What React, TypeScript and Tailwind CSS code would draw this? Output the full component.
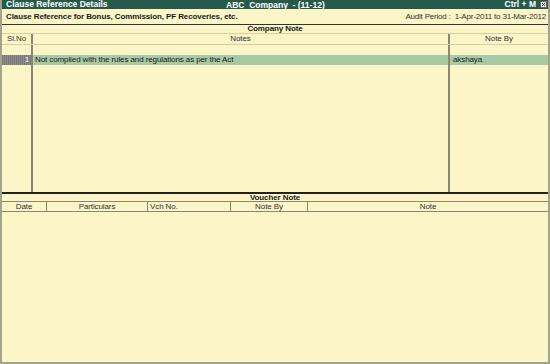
import React from "react";

export default function App() {
  const font = { fontFamily: "'Liberation Sans', Arial, sans-serif" };
  return (
    <div
      className="w-[550px] h-[364px] bg-[#fcf5c7] text-[#1a1a1a] flex flex-col border-l-2 border-r-2 border-b-2 border-[#a3a38a] overflow-hidden text-[8px] leading-none tracking-[-0.1px]"
      style={font}
    >
      {/* Title bar */}
      <div className="h-[9px] bg-[#255a4b] text-white font-bold flex items-center relative shrink-0 text-[8.5px] tracking-normal">
        <span className="pl-[4px]">Clause Reference Details</span>
        <span className="absolute left-[224px] top-[0.5px] whitespace-pre">ABC  Company  - (11-12)</span>
        <div className="ml-auto flex items-center gap-[4px] pr-[1px]">
          <span>Ctrl + M</span>
          <svg width="7" height="7" viewBox="0 0 7 7">
            <rect x="0.5" y="0.5" width="6" height="6" fill="#e6e6e6" stroke="#666" />
            <path d="M2 2 L5 5 M5 2 L2 5" stroke="#333" strokeWidth="1" />
          </svg>
        </div>
      </div>

      {/* Sub header */}
      <div className="h-[15px] flex items-center justify-between pl-[4px] pr-[2px] shrink-0 text-[8px]">
        <span className="font-bold">Clause Reference for Bonus, Commission, PF Recoveries, etc.</span>
        <span className="text-[#333] tracking-[-0.2px]">Audit Period :&nbsp; 1-Apr-2011 to 31-Mar-2012</span>
      </div>

      {/* Company Note */}
      <div className="border-t border-[#333] h-[9px] flex items-center justify-center font-bold shrink-0 text-[8px]">
        Company Note
      </div>
      <div className="border-t border-[#333] h-[12px] grid grid-cols-[31px_417px_1fr] shrink-0 border-b border-[#d8d0a0] text-[8px]">
        <div className="flex items-center justify-center border-r-2 border-[#8a8870] text-[#333]">Sl.No</div>
        <div className="flex items-center justify-center border-r-2 border-[#8a8870] text-[#333]">Notes</div>
        <div className="flex items-center justify-center text-[#333]">Note By</div>
      </div>
      <div className="h-[147px] grid grid-cols-[31px_417px_1fr] grid-rows-[10px_10px_1fr] shrink-0 text-[8px]">
        <div className="border-r-2 border-[#8a8870]"></div>
        <div className="border-r-2 border-[#8a8870]"></div>
        <div></div>
        <div className="border-r-2 border-[#8a8870] bg-[repeating-linear-gradient(90deg,#767676_0px,#767676_1px,#8e8e8e_1px,#8e8e8e_2px)] text-white flex items-center justify-end pr-[2px]">
          1
        </div>
        <div className="border-r-2 border-[#8a8870] bg-[#a9c9a4] flex items-center pl-[2px]">
          Not complied with the rules and regulations as per the Act
        </div>
        <div className="bg-[#a9c9a4] flex items-center pl-[3px]">akshaya</div>
        <div className="border-r-2 border-[#8a8870]"></div>
        <div className="border-r-2 border-[#8a8870]"></div>
        <div></div>
      </div>

      {/* Voucher Note */}
      <div className="border-t-2 border-[#222] h-[9px] flex items-center justify-center font-bold shrink-0 text-[8px]">
        Voucher Note
      </div>
      <div className="border-t border-[#8a8870] border-b border-[#8a8870] h-[11px] grid grid-cols-[45px_101px_83px_77px_1fr] shrink-0 text-[#333] text-[8px]">
        <div className="flex items-center justify-center border-r border-[#8a8870]">Date</div>
        <div className="flex items-center justify-center border-r border-[#8a8870]">Particulars</div>
        <div className="flex items-center pl-[2px] border-r border-[#8a8870]">Vch No.</div>
        <div className="flex items-center justify-center border-r border-[#8a8870]">Note By</div>
        <div className="flex items-center justify-center">Note</div>
      </div>
      <div className="flex-1"></div>
    </div>
  );
}
